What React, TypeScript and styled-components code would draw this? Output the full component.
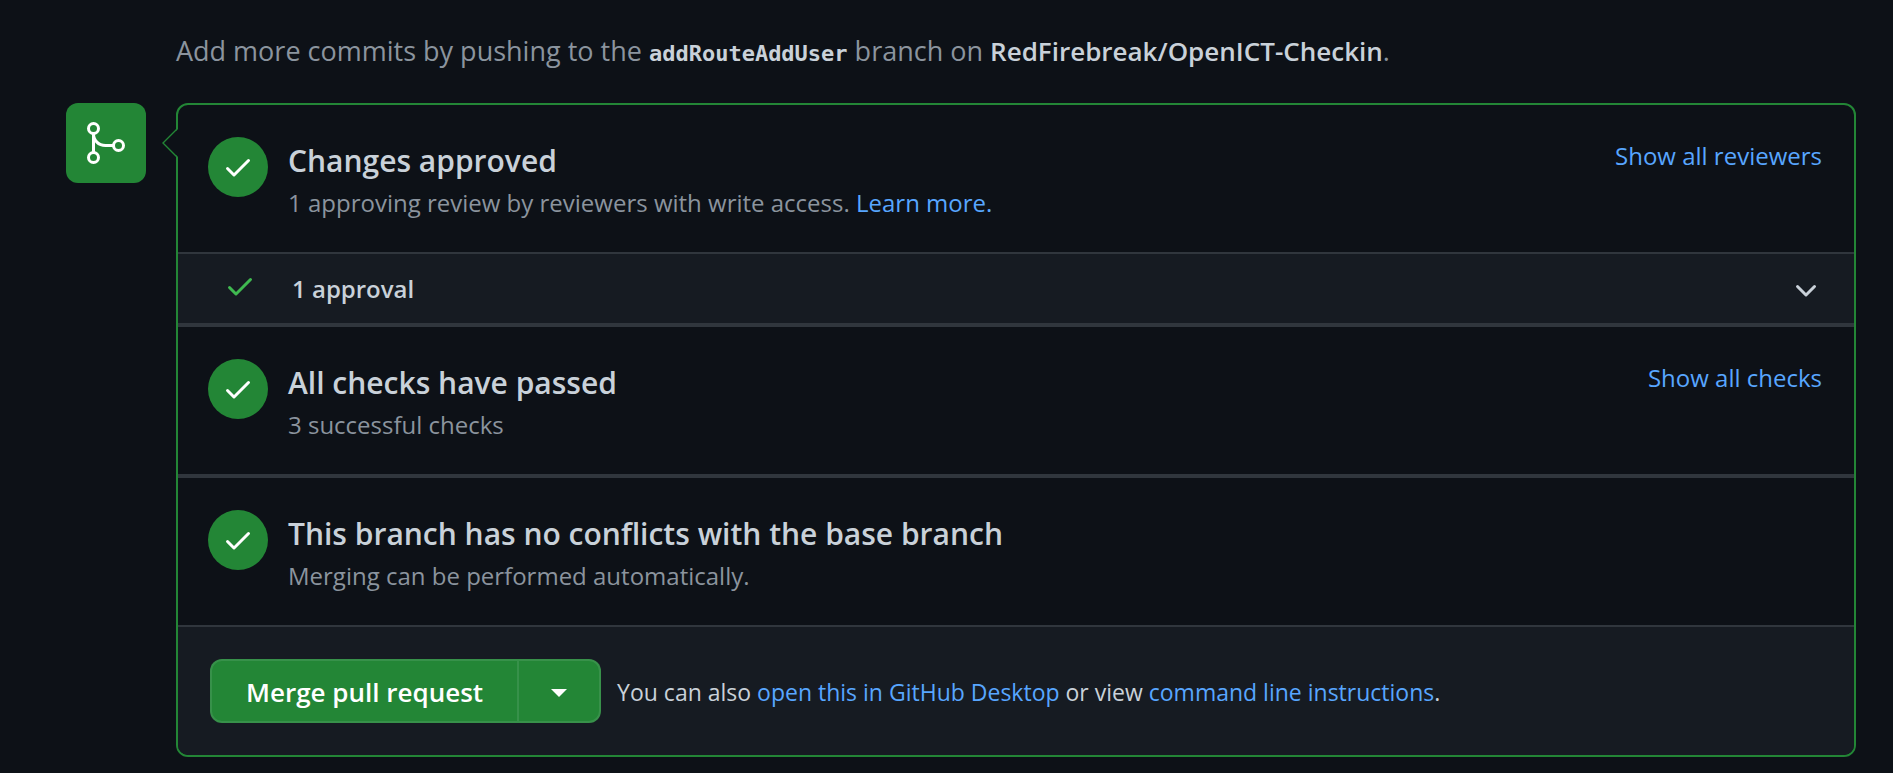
import React from "react";
import styled, { createGlobalStyle } from "styled-components";

const color = {
  canvas: "#0d1117",
  subtle: "#161b22",
  border: "#30363d",
  text: "#c9d1d9",
  muted: "#8b949e",
  link: "#58a6ff",
  green: "#238636",
  check: "#3fb950",
};

const GlobalStyle = createGlobalStyle`
  *, *::before, *::after { box-sizing: border-box; }
  body {
    margin: 0;
    background: ${color.canvas};
    color: ${color.text};
    font-family: "Open Sans", "Noto Sans", sans-serif;
    font-size: 24px;
  }
  button { font: inherit; cursor: pointer; }
  svg { display: block; }
`;

const Page = styled.main`
  padding: 30px 37px 16px 66px;
`;

const PushHint = styled.p`
  margin: 0 0 31px 110px;
  color: ${color.muted};
  font-size: 27px;
  line-height: 42px;
`;

const RepoName = styled.strong`
  color: ${color.text};
  font-size: 26px;
  font-weight: 600;
  line-height: 1;
`;

const BranchName = styled.code`
  color: ${color.text};
  font-family: "DejaVu Sans Mono", monospace;
  font-size: 22px;
  font-weight: 700;
  line-height: 1;
`;

const Timeline = styled.section`
  display: flex;
  align-items: flex-start;
  gap: 30px;
`;

const Badge = styled.div`
  display: grid;
  flex: none;
  place-items: center;
  width: 80px;
  height: 80px;
  border-radius: 12px;
  background: ${color.green};
`;

const Card = styled.div`
  position: relative;
  flex: 1;
  min-width: 0;
  border: 2px solid ${color.green};
  border-radius: 12px;
`;

const Pointer = styled.svg`
  position: absolute;
  top: 22px;
  left: -16px;
`;

const Status = styled.section<{ $divider: number }>`
  display: flex;
  align-items: flex-start;
  gap: 20px;
  padding: 32px 32px 28px 30px;
  border-bottom: ${(p) => p.$divider}px solid ${color.border};
`;

const Circle = styled.span`
  display: grid;
  flex: none;
  place-items: center;
  width: 60px;
  height: 60px;
  border-radius: 50%;
  background: ${color.green};
  color: #fff;
`;

const StatusText = styled.div`
  flex: 1;
  padding-top: 3px;
`;

const Title = styled.h3`
  margin: 0;
  font-size: 30px;
  font-weight: 600;
  line-height: 42px;
`;

const Detail = styled.p`
  margin: 0;
  color: ${color.muted};
  line-height: 42px;
`;

const Link = styled.a`
  color: ${color.link};
  text-decoration: none;
  &:hover { text-decoration: underline; }
`;

const LinkButton = styled.button`
  flex: none;
  padding: 0;
  border: 0;
  background: none;
  color: ${color.link};
  line-height: 38px;
`;

const ApprovalRow = styled.button`
  display: flex;
  align-items: center;
  gap: 36px;
  width: 100%;
  padding: 0 32px 0 46px;
  border: 0;
  border-bottom: 4px solid ${color.border};
  background: ${color.subtle};
  color: ${color.text};
  text-align: left;
`;

const ApprovalCheck = styled.span`
  padding-bottom: 6px;
  color: ${color.check};
`;

const ApprovalLabel = styled.span`
  flex: 1;
  font-weight: 600;
  line-height: 69px;
`;

const Footer = styled.footer`
  display: flex;
  align-items: center;
  gap: 16px;
  padding: 32px;
  border-radius: 0 0 10px 10px;
  background: ${color.subtle};
`;

const ButtonGroup = styled.div`
  display: flex;
  flex: none;
  height: 64px;
`;

const GreenButton = styled.button`
  border: 2px solid rgba(240, 246, 252, 0.1);
  background: ${color.green};
  color: #fff;
`;

const MergeButton = styled(GreenButton)`
  padding: 2px 34px 0;
  border-radius: 12px 0 0 12px;
  font-size: 26px;
  font-weight: 600;
`;

const OptionsButton = styled(GreenButton)`
  display: grid;
  place-items: center;
  width: 82px;
  padding: 4px 0 0;
  border-left: 0;
  border-radius: 0 12px 12px 0;
`;

const FooterNote = styled.p`
  margin: 0;
  padding-top: 2px;
  font-size: 23px;
  line-height: 36px;
`;

const CheckIcon = () => (
  <svg width="32" height="32" viewBox="0 0 16 16" fill="currentColor" aria-hidden="true">
    <path d="M13.78 4.22a.75.75 0 010 1.06l-7.25 7.25a.75.75 0 01-1.06 0L2.22 9.28a.75.75 0 011.06-1.06L6 10.94l6.72-6.72a.75.75 0 011.06 0z" />
  </svg>
);

const ChevronIcon = () => (
  <svg width="32" height="32" viewBox="0 0 16 16" fill="currentColor" aria-hidden="true">
    <path d="M12.78 6.22a.75.75 0 010 1.06l-4.25 4.25a.75.75 0 01-1.06 0L3.22 7.28a.75.75 0 011.06-1.06L8 9.94l3.72-3.72a.75.75 0 011.06 0z" />
  </svg>
);

const MergeIcon = () => (
  <svg width="48" height="48" viewBox="0 0 48 48" fill="none" stroke="#fff" strokeWidth="3" aria-hidden="true">
    <circle cx="11.5" cy="9.5" r="5" />
    <circle cx="11.5" cy="38.5" r="5" />
    <circle cx="36.5" cy="26.5" r="5" />
    <path d="M11.5 14.5v19M11.5 14.5c0 7 5 12 12 12h8" />
  </svg>
);

const CaretIcon = () => (
  <svg width="16" height="8" viewBox="0 0 16 8" fill="currentColor" aria-hidden="true">
    <path d="M0 0h16L8 8z" />
  </svg>
);

type StatusItemProps = {
  title: string;
  divider: number;
  action?: string;
  children: React.ReactNode;
};

const StatusItem = ({ title, divider, action, children }: StatusItemProps) => (
  <Status $divider={divider}>
    <Circle>
      <CheckIcon />
    </Circle>
    <StatusText>
      <Title>{title}</Title>
      <Detail>{children}</Detail>
    </StatusText>
    {action && <LinkButton type="button">{action}</LinkButton>}
  </Status>
);

export default function App() {
  return (
    <Page>
      <GlobalStyle />
      <PushHint>
        Add more commits by pushing to the <BranchName>addRouteAddUser</BranchName> branch on{" "}
        <RepoName>RedFirebreak/OpenICT-Checkin</RepoName>.
      </PushHint>
      <Timeline>
        <Badge>
          <MergeIcon />
        </Badge>
        <Card>
          <Pointer width="16" height="32" viewBox="0 0 16 32" aria-hidden="true">
            <path d="M16 2L2 16L16 30z" fill={color.canvas} />
            <path d="M15 2L1 16L15 30" fill="none" stroke={color.green} strokeWidth="1.4" />
          </Pointer>
          <StatusItem title="Changes approved" divider={2} action="Show all reviewers">
            1 approving review by reviewers with write access. <Link href="#learn-more">Learn more.</Link>
          </StatusItem>
          <ApprovalRow type="button" aria-expanded="false">
            <ApprovalCheck>
              <CheckIcon />
            </ApprovalCheck>
            <ApprovalLabel>1 approval</ApprovalLabel>
            <ChevronIcon />
          </ApprovalRow>
          <StatusItem title="All checks have passed" divider={4} action="Show all checks">
            3 successful checks
          </StatusItem>
          <StatusItem title="This branch has no conflicts with the base branch" divider={2}>
            Merging can be performed automatically.
          </StatusItem>
          <Footer>
            <ButtonGroup>
              <MergeButton type="button">Merge pull request</MergeButton>
              <OptionsButton type="button" aria-label="Select merge method">
                <CaretIcon />
              </OptionsButton>
            </ButtonGroup>
            <FooterNote>
              You can also <Link href="#desktop">open this in GitHub Desktop</Link> or view{" "}
              <Link href="#command-line">command line instructions</Link>.
            </FooterNote>
          </Footer>
        </Card>
      </Timeline>
    </Page>
  );
}
